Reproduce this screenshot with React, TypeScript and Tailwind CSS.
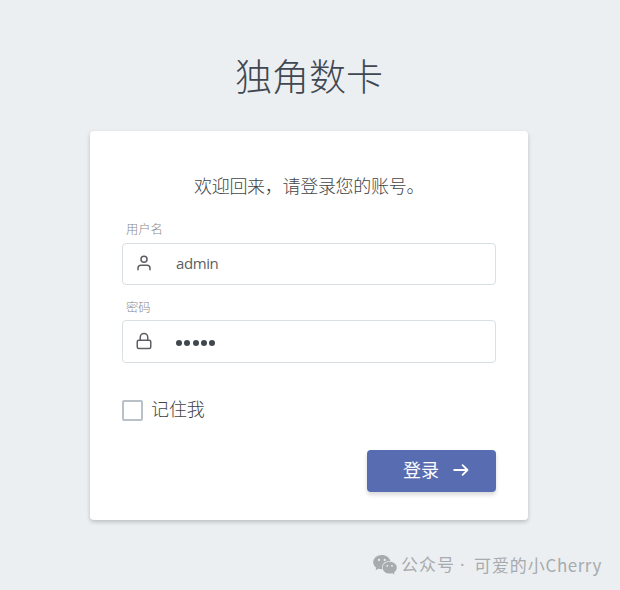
import type { ReactNode } from "react";
import { FiLock, FiUser } from "react-icons/fi";

function Field({ label, icon, className, boxClass, children }: { label: string; icon: ReactNode; className: string; boxClass: string; children: ReactNode }) {
  return (
    <div className={className}>
      <div className="pl-[4px] text-[12.300px] leading-[12px] font-light text-[#888]">{label}</div>
      <div className={`flex items-center rounded-[4px] border border-[#d9dfe2] bg-white pb-[2px] pl-[12px] text-[#5c5f63] ${boxClass}`}>
        {icon}
        <div className="ml-[23px]">{children}</div>
      </div>
    </div>
  );
}

function WechatLogo() {
  return (
    <svg width="24" height="20" viewBox="0 0 24 20" fill="#a7abad">
      <path d="M8.800 0C4 0 .2 3.200.2 7.200c0 2.200 1.200 4.200 3.100 5.500l-.8 2.600 3-1.500c1 .3 2 .5 3.200.5h.6a6 6 0 0 1-.3-1.700c0-3.700 3.500-6.500 7.700-6.500h.7C16.700 2.600 13.100 0 8.800 0ZM6 3.800a1.100 1.100 0 1 1 0 2.200 1.100 1.100 0 0 1 0-2.200Zm5.700 0a1.100 1.100 0 1 1 0 2.200 1.100 1.100 0 0 1 0-2.200Z" />
      <path d="M23.800 12.700c0-3.300-3.200-5.900-7.100-5.900s-7.100 2.600-7.100 5.900 3.200 5.900 7.100 5.900c.9 0 1.700-.1 2.500-.4l2.400 1.300-.6-2.200c1.700-1.100 2.800-2.700 2.800-4.600Zm-9.500-2.800a.9.900 0 1 1 0 1.900.9.900 0 0 1 0-1.900Zm4.700 0a.9.900 0 1 1 0 1.900.9.900 0 0 1 0-1.900Z" />
    </svg>
  );
}

export default function App() {
  return (
    <div className="flex h-[590px] w-[620px] flex-col overflow-hidden bg-[#ebeff2] font-['Noto_Sans','Noto_Sans_CJK_SC',sans-serif]">
      <h1 className="ml-[235px] mt-[52px] h-[50px] text-[37px] leading-[50px] font-light whitespace-nowrap text-[#414750]">独角数卡</h1>
      <main className="ml-[90px] mt-[29px] h-[389px] w-[438px] rounded-[4px] bg-white px-8 pt-[43px] shadow-[0_2px_4px_rgba(0,0,0,0.2)]">
        <p className="ml-[72px] h-[24px] text-[18px] leading-[24px] font-light tracking-[-0.300px] whitespace-nowrap text-[#444]">欢迎回来，请登录您的账号。</p>
        <Field label="用户名" className="mt-[26px]" boxClass="mt-[7px] h-[42px]" icon={<FiUser size={18} strokeWidth={2} />}>
          <span className="font-['Open_Sans'] text-[15px] tracking-[-0.400px]">admin</span>
        </Field>
        <Field label="密码" className="mt-[17px]" boxClass="mt-[6px] h-[43px]" icon={<FiLock size={18} strokeWidth={2} />}>
          <span className="flex gap-[2.300px] pt-[5px]">
            {[0, 1, 2, 3, 4].map((i) => (
              <i key={i} className="size-[6px] rounded-full bg-[#414750]" />
            ))}
          </span>
        </Field>
        <label className="mt-[37px] flex h-[21px] items-center gap-[8px] text-[18px] font-light tracking-[-0.100px] text-[#444]">
          <span className="size-[21px] rounded-[2px] border-2 border-[#b8c0c8]" />
          <span className="pb-[2px] leading-[19px]">记住我</span>
        </label>
        <button className="ml-auto mt-[29px] flex h-[42px] w-[129px] items-center rounded-[4px] bg-[#586cb1] pb-[3px] pl-[36px] text-white shadow-[0_3px_4px_rgba(0,0,0,0.15)]">
          <span className="text-[18px] leading-[24px]">登录</span>
          <svg width="16" height="14" viewBox="0 0 16 14" className="ml-[14px]" fill="none" stroke="currentColor" strokeWidth="1.800" strokeLinecap="round" strokeLinejoin="round">
            <path d="M1.200 7H14.500M9.600 2.200 14.500 7 9.600 11.800" />
          </svg>
        </button>
      </main>
      <footer className="ml-[373px] mt-[35px] flex h-[20px] items-center text-[17px] leading-[20px] whitespace-nowrap text-[#a7abad]">
        <WechatLogo />
        <span className="ml-1 tracking-[1px]">公众号</span>
        <span className="ml-[5px] w-[14px]">·</span>
        <span className="pb-[1px] font-['Noto_Sans_CJK_SC',sans-serif] tracking-[0.900px]">
          可爱的小<span className="tracking-[0.500px]">Cherry</span>
        </span>
      </footer>
    </div>
  );
}
